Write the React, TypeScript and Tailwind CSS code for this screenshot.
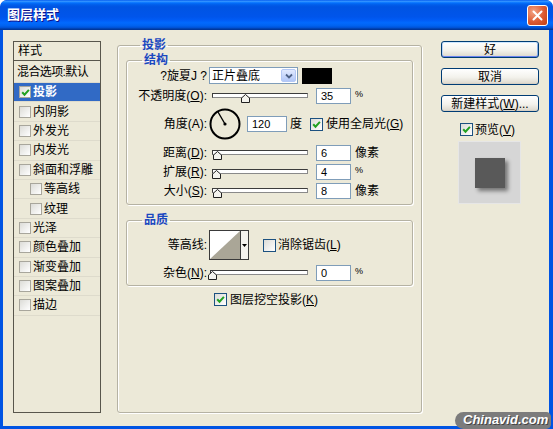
import React from "react";

const FONT = "font-['Liberation_Sans','Noto_Sans_CJK_SC',sans-serif]";

const STYLES = [
  { name: "投影", checked: true, selected: true },
  { name: "内阴影" },
  { name: "外发光" },
  { name: "内发光" },
  { name: "斜面和浮雕" },
  { name: "等高线", sub: true },
  { name: "纹理", sub: true },
  { name: "光泽" },
  { name: "颜色叠加" },
  { name: "渐变叠加" },
  { name: "图案叠加" },
  { name: "描边" },
];

function Check({ checked, light }: { checked?: boolean; light?: boolean }) {
  return (
    <span
      className={`inline-flex shrink-0 items-center justify-center border bg-[linear-gradient(135deg,#dcdcd7,#ffffff)] ${
        light ? "w-[12px] h-[12px] border-[#a8a69c]" : "w-[13px] h-[13px] border-[#1c5180]"
      }`}
    >
      {checked && (
        <svg width="9" height="9" viewBox="0 0 9 9">
          <path d="M1.2 4.3 L3.5 6.7 L7.9 1.9" stroke="#21a121" strokeWidth="2" fill="none" />
        </svg>
      )}
    </span>
  );
}

function Slider({ className, at }: { className: string; at: number }) {
  return (
    <div className={`relative h-[16px] shrink-0 ${className}`}>
      <div className="mt-[5px] h-[5px] border border-[#3c3c3c] border-b-[#8a8a8a] border-r-[#8a8a8a] bg-white" />
      <svg
        className="absolute top-[6px]"
        style={{ left: at - 4.5 }}
        width="9"
        height="9"
        viewBox="0 0 9 9"
      >
        <path d="M4.5 0.5 L8.5 4 L8.5 8.5 L0.5 8.5 L0.5 4 Z" fill="#f4f3ee" stroke="#202020" strokeWidth="1" />
      </svg>
    </div>
  );
}

function Field({ value, className = "w-[35px]" }: { value: string; className?: string }) {
  return (
    <div
      className={`h-[16px] shrink-0 border border-[#7f9db9] bg-white pl-[4px] text-[11px] leading-[14px] ${className}`}
    >
      {value}
    </div>
  );
}

function Pct() {
  return <span className="ml-[4px] self-start mt-[2px] text-[9px] leading-none">%</span>;
}

function Row({
  label,
  className,
  children,
}: {
  label: React.ReactNode;
  className: string;
  children: React.ReactNode;
}) {
  return (
    <div className={`flex items-center ${className}`}>
      <span className="w-[80px] shrink-0 text-right whitespace-nowrap">{label}</span>
      {children}
    </div>
  );
}

function Btn({ children, def }: { children: React.ReactNode; def?: boolean }) {
  return (
    <div
      className={`h-[17px] w-full rounded-[3px] border border-[#003c74] bg-[linear-gradient(to_bottom,#ffffff,#f3f2ec_55%,#dcd7cb)] flex items-center justify-center whitespace-nowrap ${
        def
          ? "shadow-[inset_0_1px_0_#cee7ff,inset_0_-1px_0_#6982ee,inset_1px_0_0_#bcd4f6,inset_-1px_0_0_#89ade4]"
          : "shadow-[inset_0_-1px_0_#d6d0c5]"
      }`}
    >
      {children}
    </div>
  );
}

const GROUP =
  "border border-[#b5b2a3] rounded-[3px] shadow-[inset_1px_1px_0_#ffffff,1px_1px_0_#ffffff]";
const LEGEND = "px-[2px] text-[#1b48c0] font-bold leading-[14px]";

export default function App() {
  return (
    <div
      className={`relative w-[553px] h-[429px] overflow-hidden flex flex-col bg-[#0054e3] rounded-t-[7px] text-[12px] text-black ${FONT}`}
    >
      {/* title bar */}
      <div className="h-[30px] shrink-0 flex items-center justify-between pl-[7px] pr-[5px] rounded-t-[7px] bg-[linear-gradient(to_bottom,#0058ee_0%,#3593ff_4%,#288eff_6%,#127dff_8%,#036ffc_10%,#0262ee_14%,#0057e5_20%,#0054e3_24%,#0055eb_56%,#005bf5_66%,#026afe_76%,#0062ef_86%,#0052d6_92%,#0040ab_96%,#003092_100%)]">
        <span className="text-white font-bold text-[13px] [text-shadow:1px_1px_0_#0f1089]">图层样式</span>
        <div className="w-[21px] h-[21px] rounded-[3px] border border-white bg-[radial-gradient(circle_at_30%_30%,#f3a384,#dd5a31_55%,#c23f12)] flex items-center justify-center">
          <svg width="11" height="11" viewBox="0 0 11 11">
            <path d="M1.5 1.5 L9.5 9.5 M9.5 1.5 L1.5 9.5" stroke="white" strokeWidth="2" strokeLinecap="round" />
          </svg>
        </div>
      </div>

      {/* body */}
      <div className="flex-1 ml-[3px] mr-[4px] mb-[3px] bg-[#ece9d8] flex items-start pl-[10px] pt-[8px]">
        {/* style list */}
        <div className="mt-[3px] w-[88px] h-[372px] shrink-0 border border-[#58564c] flex flex-col">
          <div className="h-[19px] shrink-0 border-b border-[#58564c] pl-[4px] flex items-center">样式</div>
          <div className="h-[22px] shrink-0 pl-[3px] flex items-center border-b border-[#dedbcc] whitespace-nowrap tracking-[-0.6px]">
            混合选项:默认
          </div>
          {STYLES.map((s) => (
            <div
              key={s.name}
              className={`h-[19.4px] shrink-0 flex items-center gap-[2px] border-b border-[#dedbcc] whitespace-nowrap ${
                s.sub ? "pl-[16px]" : "pl-[5px]"
              } ${s.selected ? "bg-[#316ac5] text-white font-bold" : ""}`}
            >
              <Check checked={s.checked} light />
              <span>{s.name}</span>
            </div>
          ))}
        </div>

        {/* main panel */}
        <fieldset className={`ml-[16px] w-[305px] h-[375px] shrink-0 px-[8px] ${GROUP}`}>
          <legend className={`ml-[14px] ${LEGEND}`}>投影</legend>

          <fieldset className={`mt-[1px] pb-[5px] ${GROUP}`}>
            <legend className={`ml-[15px] ${LEGEND}`}>结构</legend>

            <Row label="?旋夏J ?" className="h-[17px]">
              <div className="ml-[2px] w-[89px] h-[17px] shrink-0 border border-[#7f9db9] bg-white flex items-center justify-between pl-[2px] pr-[1px]">
                <span>正片叠底</span>
                <span className="w-[15px] h-[13px] rounded-[2px] border border-[#b3c8f5] bg-[linear-gradient(to_bottom,#e1eafe,#b2c7f7)] flex items-center justify-center">
                  <svg width="8" height="6" viewBox="0 0 8 6">
                    <path d="M1 1.5 L4 4.5 L7 1.5" stroke="#4d6185" strokeWidth="1.8" fill="none" />
                  </svg>
                </span>
              </div>
              <div className="ml-[4px] w-[30px] h-[16px] shrink-0 bg-black" />
            </Row>

            <Row
              label={
                <>
                  不透明度(<u>O</u>):
                </>
              }
              className="mt-[4px] h-[16px]"
            >
              <Slider className="ml-[5px] w-[96px]" at={33} />
              <Field value="35" className="ml-[8px] w-[35px]" />
              <Pct />
            </Row>

            <Row label="角度(A):" className="mt-[3px] h-[34px]">
              <svg className="ml-[2px] shrink-0" width="32" height="34" viewBox="0 0 32 34">
                <circle cx="16" cy="17" r="14.5" fill="none" stroke="#000" strokeWidth="2" />
                <line x1="16" y1="17" x2="9" y2="5" stroke="#000" strokeWidth="1.4" />
                <circle cx="16" cy="17" r="1.6" fill="#000" />
              </svg>
              <Field value="120" className="ml-[6px] w-[40px]" />
              <span className="ml-[3px]">度</span>
              <span className="ml-[8px] flex items-center">
                <Check checked />
              </span>
              <span className="ml-[3px] whitespace-nowrap">
                使用全局光(<u>G</u>)
              </span>
            </Row>

            <Row
              label={
                <>
                  距离(<u>D</u>):
                </>
              }
              className="mt-[4px] h-[16px]"
            >
              <Slider className="ml-[5px] w-[96px]" at={5} />
              <Field value="6" className="ml-[8px] w-[35px]" />
              <span className="ml-[4px]">像素</span>
            </Row>

            <Row
              label={
                <>
                  扩展(<u>R</u>):
                </>
              }
              className="mt-[3px] h-[16px]"
            >
              <Slider className="ml-[5px] w-[96px]" at={4} />
              <Field value="4" className="ml-[8px] w-[35px]" />
              <Pct />
            </Row>

            <Row
              label={
                <>
                  大小(<u>S</u>):
                </>
              }
              className="mt-[3px] h-[16px]"
            >
              <Slider className="ml-[5px] w-[96px]" at={5.5} />
              <Field value="8" className="ml-[8px] w-[35px]" />
              <span className="ml-[4px]">像素</span>
            </Row>
          </fieldset>

          <fieldset className={`mt-[8px] pb-[4px] ${GROUP}`}>
            <legend className={`ml-[15px] ${LEGEND}`}>品质</legend>

            <Row label="等高线:" className="mt-[3px] h-[30px]">
              <div className="ml-[2px] w-[40px] h-[30px] shrink-0 border border-[#3a3a3a] flex">
                <svg width="30" height="28" viewBox="0 0 30 28" className="shrink-0 bg-white">
                  <path d="M0 28 L30 0 L30 28 Z" fill="#aaa697" />
                </svg>
                <div className="flex-1 border-l border-[#3a3a3a] bg-[#f4f3ee] flex items-center justify-center">
                  <svg width="5" height="3" viewBox="0 0 5 3">
                    <path d="M0 0 L5 0 L2.5 3 Z" fill="#000" />
                  </svg>
                </div>
              </div>
              <span className="ml-[14px] flex items-center">
                <Check />
              </span>
              <span className="ml-[2px] whitespace-nowrap">
                消除锯齿(<u>L</u>)
              </span>
            </Row>

            <Row
              label={
                <>
                  杂色(<u>N</u>):
                </>
              }
              className="mt-[5px] h-[16px]"
            >
              <Slider className="ml-[3px] w-[98px]" at={2.5} />
              <Field value="0" className="ml-[8px] w-[35px]" />
              <Pct />
            </Row>
          </fieldset>

          <div className="mt-[7px] ml-[88px] h-[13px] flex items-center">
            <Check checked />
            <span className="ml-[3px] whitespace-nowrap">
              图层挖空投影(<u>K</u>)
            </span>
          </div>
        </fieldset>

        {/* buttons */}
        <div className="ml-[19px] mt-[3px] w-[98px] shrink-0 flex flex-col">
          <Btn def>好</Btn>
          <div className="mt-[10px]">
            <Btn>取消</Btn>
          </div>
          <div className="mt-[10px]">
            <Btn>
              新建样式(<u>W</u>)...
            </Btn>
          </div>
          <div className="mt-[11px] ml-[19px] h-[13px] flex items-center">
            <Check checked />
            <span className="ml-[2px]">
              预览(<u>V</u>)
            </span>
          </div>
          <div className="mt-[5px] ml-[17px] w-[63px] h-[63px] border border-[#e6e6e6] bg-[#d6d6d6] flex items-center justify-center">
            <div className="w-[30px] h-[30px] bg-[#595959] shadow-[3px_3px_4px_rgba(0,0,0,0.45)]" />
          </div>
        </div>
      </div>

      {/* watermark */}
      <div className="absolute left-[455px] top-[412px] w-[96px] h-[17px] rounded-l-[9px] rounded-r-[5px] bg-[#7c7c7c] pl-[8px] text-white italic font-bold text-[13px] leading-[16px] [text-shadow:1px_1px_0_#444]">
        Chinavid.com
      </div>
    </div>
  );
}
